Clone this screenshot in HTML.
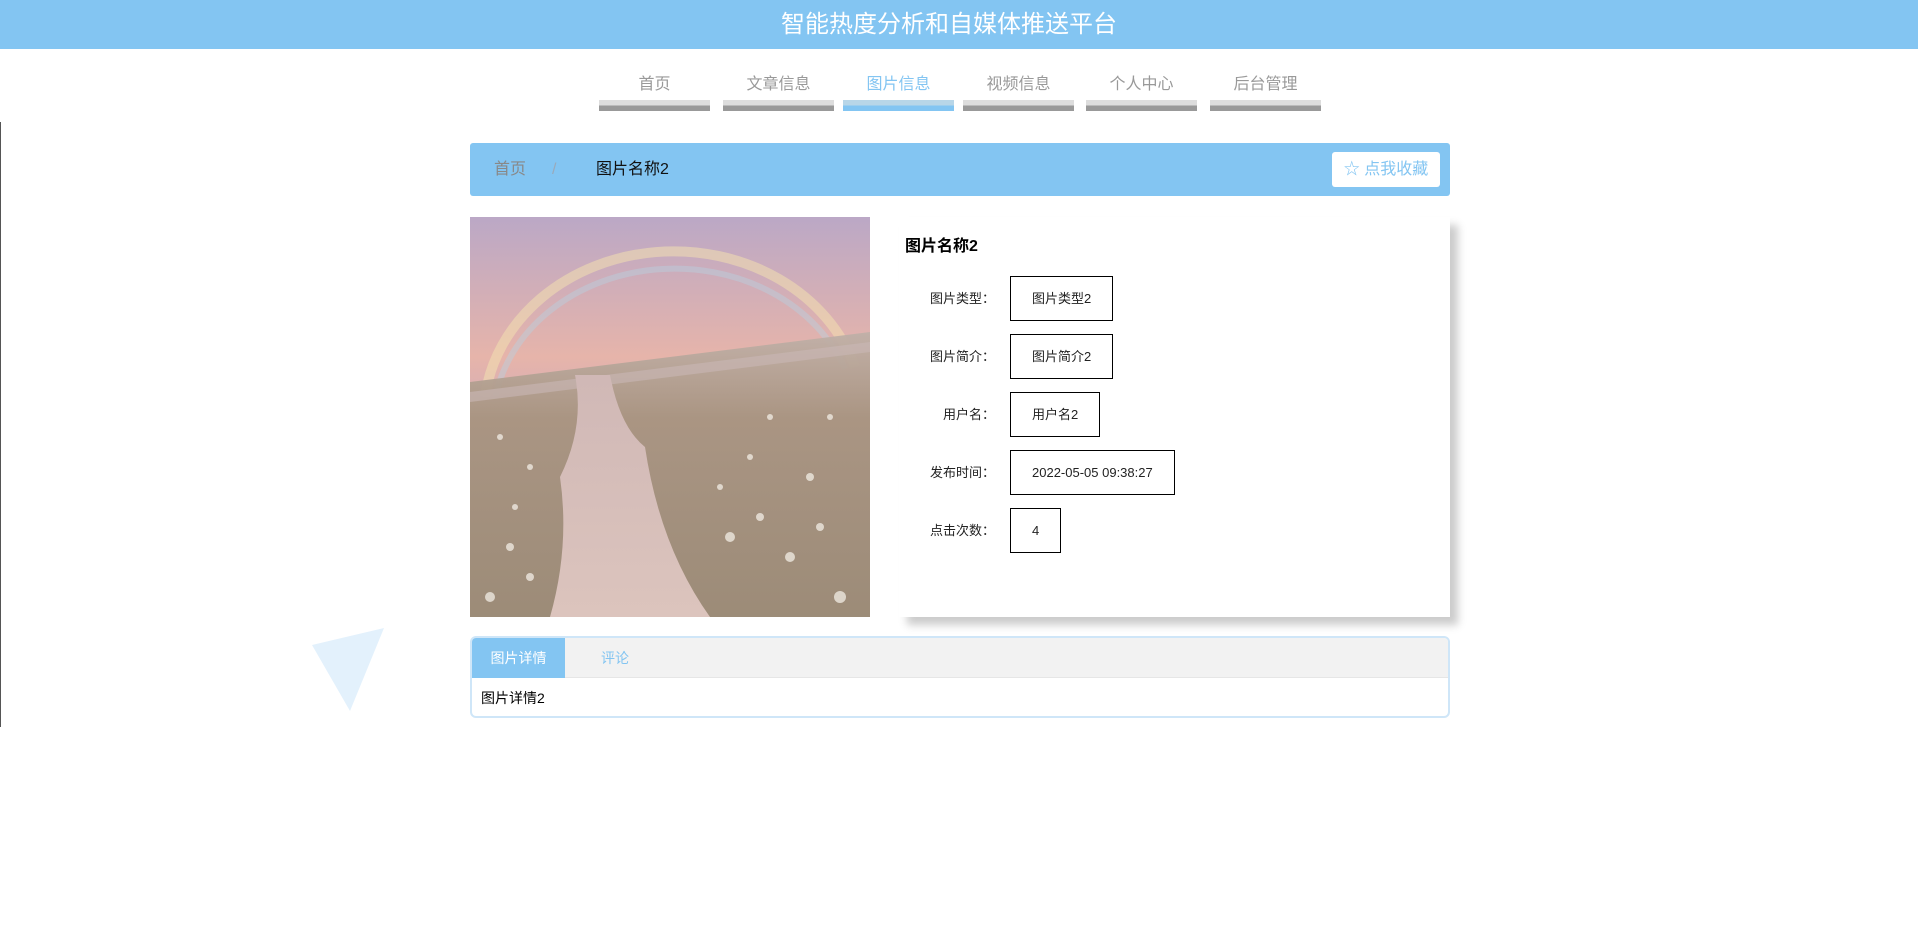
<!DOCTYPE html>
<html><head><meta charset="utf-8"><style>
*{margin:0;padding:0;box-sizing:border-box}
body{width:1918px;height:932px;background:#fff;font-family:"Liberation Sans","Noto Sans CJK SC",sans-serif;position:relative;overflow:hidden}
.hd{height:49px;background:#83c5f2;color:#fff;font-size:24px;text-align:center;line-height:49px;padding-right:20px}
.nav a{position:absolute;top:70px;width:111px;text-align:center;font-size:16px;color:#999;height:41px}
.nav a i{position:absolute;left:0;top:30px;width:111px;height:11px;background:linear-gradient(#ddd 0 50%,#999 50%)}
.nav a.on{color:#83c5f2}
.nav a.on i{background:linear-gradient(#b8d6e8 0 50%,#83c5f2 50%)}
.vl{position:absolute;left:0;top:122px;width:1px;height:605px;background:#555}
.bc{position:absolute;left:470px;top:143px;width:980px;height:53px;background:#83c5f2;border-radius:3px;font-size:16px;line-height:53px}
.bc span{position:absolute}
.btn{position:absolute;left:862px;top:9px;width:108px;height:35px;background:#fff;border-radius:3px;color:#83c5f2;font-size:16px;line-height:35px;text-align:center}
.img{position:absolute;left:470px;top:217px;width:400px;height:400px}
.info{position:absolute;left:899px;top:217px;width:551px;height:400px;background:#fff;box-shadow:8px 8px 8px #ccc}
.info h3{position:absolute;left:6px;top:15px;font-size:16px;font-weight:bold;color:#000}
.row{position:absolute;left:0;height:45px;font-size:13px;color:#222}
.row .l{position:absolute;left:0;width:96px;text-align:right;line-height:45px}
.row .v{position:absolute;left:111px;top:0;height:45px;border:1px solid #000;line-height:43px;padding:0 21px;white-space:nowrap}
.tabs{position:absolute;left:470px;top:636px;width:980px;height:82px;border:2px solid #cfe6f8;border-radius:6px;overflow:hidden}
.th{height:40px;background:#f2f2f2;border-bottom:1px solid #e6e6e6;position:relative;font-size:14px}
.th .a{position:absolute;left:0;top:0;width:93px;height:40px;background:#83c5f2;color:#fff;text-align:center;line-height:40px}
.th .b{position:absolute;left:129px;line-height:40px;color:#83c5f2}
.tc{padding:10px 9px;font-size:14px;color:#000}
</style></head><body>
<div class="hd">智能热度分析和自媒体推送平台</div>
<div class="nav">
<a style="left:599px">首页<i></i></a>
<a style="left:723px">文章信息<i></i></a>
<a class="on" style="left:843px">图片信息<i></i></a>
<a style="left:963px">视频信息<i></i></a>
<a style="left:1086px">个人中心<i></i></a>
<a style="left:1210px">后台管理<i></i></a>
</div>
<div class="vl"></div>
<svg style="position:absolute;left:0;top:0" width="400" height="720"><polygon points="312,645 384,628 350,711" fill="#e3f1fc"/></svg>
<div class="bc">
<span style="left:24px;color:#888">首页</span>
<span style="left:82px;color:#9ab">/</span>
<span style="left:126px;color:#111">图片名称2</span>
<div class="btn">☆ 点我收藏</div>
</div>
<svg class="img" viewBox="0 0 400 400">
<defs>
<linearGradient id="sk" x1="0" y1="0" x2="0" y2="1"><stop offset="0" stop-color="#bba8c6"/><stop offset=".35" stop-color="#e6b4aa"/><stop offset=".6" stop-color="#c8a8c0"/></linearGradient>
<linearGradient id="gr" x1="0" y1="0" x2="0" y2="1"><stop offset="0" stop-color="#c0b0a8"/><stop offset=".3" stop-color="#a89480"/><stop offset="1" stop-color="#9a8a74"/></linearGradient>
<linearGradient id="pt" x1="0" y1="0" x2="0" y2="1"><stop offset="0" stop-color="#d0b8b6"/><stop offset="1" stop-color="#dcc4bd"/></linearGradient>
</defs>
<rect width="400" height="400" fill="url(#sk)"/>
<path d="M15 180 A190 165 0 0 1 385 150" fill="none" stroke="#f2e0b0" stroke-width="10" opacity=".55"/>
<path d="M25 182 A182 155 0 0 1 375 152" fill="none" stroke="#b8d0e0" stroke-width="6" opacity=".45"/>
<path d="M0 165 L400 115 L400 400 L0 400Z" fill="url(#gr)" opacity=".95"/>
<path d="M0 175 L400 125 L400 135 L0 185Z" fill="#c9b7b5" opacity=".6"/>
<path d="M105 158 L140 158 Q150 210 175 230 Q190 330 240 400 L80 400 Q100 330 90 260 Q115 210 105 158Z" fill="url(#pt)"/>
<g fill="#f3eee6" opacity=".75">
<circle cx="30" cy="220" r="3"/><circle cx="60" cy="250" r="3"/><circle cx="300" cy="200" r="3"/><circle cx="340" cy="260" r="4"/><circle cx="260" cy="320" r="5"/><circle cx="320" cy="340" r="5"/><circle cx="370" cy="380" r="6"/><circle cx="40" cy="330" r="4"/><circle cx="20" cy="380" r="5"/><circle cx="280" cy="240" r="3"/><circle cx="360" cy="200" r="3"/><circle cx="45" cy="290" r="3"/><circle cx="250" cy="270" r="3"/><circle cx="290" cy="300" r="4"/><circle cx="350" cy="310" r="4"/><circle cx="60" cy="360" r="4"/>
</g>
</svg>
<div class="info">
<h3>图片名称2</h3>
<div class="row" style="top:59px"><div class="l">图片类型：</div><div class="v">图片类型2</div></div>
<div class="row" style="top:117px"><div class="l">图片简介：</div><div class="v">图片简介2</div></div>
<div class="row" style="top:175px"><div class="l">用户名：</div><div class="v">用户名2</div></div>
<div class="row" style="top:233px"><div class="l">发布时间：</div><div class="v">2022-05-05 09:38:27</div></div>
<div class="row" style="top:291px"><div class="l">点击次数：</div><div class="v">4</div></div>
</div>
<div class="tabs">
<div class="th"><div class="a">图片详情</div><div class="b">评论</div></div>
<div class="tc">图片详情2</div>
</div>
</body></html>
